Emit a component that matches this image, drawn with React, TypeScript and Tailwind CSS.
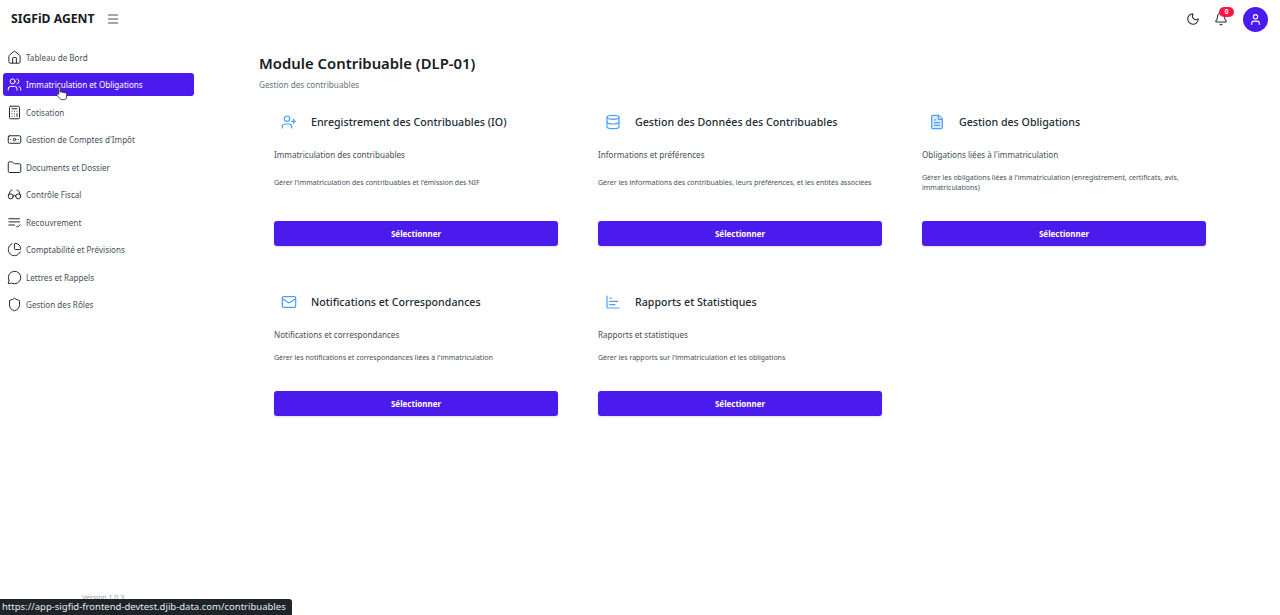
import { Bell, Calculator, Banknote, ChartBar, ChartPie, Database, FileText, Folder, Glasses, House, Mail, Menu, MessageCircle, Moon, Shield, User, UserPlus, Users } from "lucide-react";
import type { ComponentType } from "react";

type Icon = ComponentType<{ size?: number; strokeWidth?: number; className?: string }>;

function ListCheck({ size, strokeWidth, className }: { size?: number; strokeWidth?: number; className?: string }) {
  return (
    <svg width={size} height={size} viewBox="0 0 24 24" fill="none" stroke="currentColor" strokeWidth={strokeWidth} strokeLinecap="round" strokeLinejoin="round" className={className}>
      <path d="M3 6h17M3 11h17M3 16h9M15 17.500l2 2 4-4" />
    </svg>
  );
}

const NAV: { label: string; icon: Icon; active?: boolean }[] = [
  { label: "Tableau de Bord", icon: House },
  { label: "Immatriculation et Obligations", icon: Users, active: true },
  { label: "Cotisation", icon: Calculator },
  { label: "Gestion de Comptes d'Impôt", icon: Banknote },
  { label: "Documents et Dossier", icon: Folder },
  { label: "Contrôle Fiscal", icon: Glasses },
  { label: "Recouvrement", icon: ListCheck },
  { label: "Comptabilité et Prévisions", icon: ChartPie },
  { label: "Lettres et Rappels", icon: MessageCircle },
  { label: "Gestion des Rôles", icon: Shield },
];

const CARDS: { title: string; sub: string; desc: string; icon: Icon; fill?: boolean }[] = [
  {
    title: "Enregistrement des Contribuables (IO)",
    sub: "Immatriculation des contribuables",
    desc: "Gérer l'immatriculation des contribuables et l'émission des NIF",
    icon: UserPlus,
  },
  {
    title: "Gestion des Données des Contribuables",
    sub: "Informations et préférences",
    desc: "Gérer les informations des contribuables, leurs préférences, et les entités associées",
    icon: Database,
  },
  {
    title: "Gestion des Obligations",
    sub: "Obligations liées à l'immatriculation",
    desc: "Gérer les obligations liées à l'immatriculation (enregistrement, certificats, avis, immatriculations)",
    icon: FileText,
    fill: true,
  },
  {
    title: "Notifications et Correspondances",
    sub: "Notifications et correspondances",
    desc: "Gérer les notifications et correspondances liées à l'immatriculation",
    icon: Mail,
  },
  {
    title: "Rapports et Statistiques",
    sub: "Rapports et statistiques",
    desc: "Gérer les rapports sur l'immatriculation et les obligations",
    icon: ChartBar,
  },
];

function Card({ title, sub, desc, icon: Ico, fill }: (typeof CARDS)[number]) {
  return (
    <div className="flex w-[314px] flex-col px-[15px]">
      <div className="flex h-[30px] items-center gap-[14px] pl-[7px]">
        <Ico size={16} strokeWidth={1.8} className={fill ? "shrink-0 fill-blue-100 text-[#4d9ff5]" : "shrink-0 text-[#4d9ff5]"} />
        <h3 className="text-[10.65px] font-medium leading-4 text-[#212b36]">{title}</h3>
      </div>
      <p className="mt-[12px] text-[8.1px] leading-3 text-[#454f5b]">{sub}</p>
      <div className="mb-[28px] mt-[12px] flex flex-1 items-center">
        <p className="text-[7px] leading-[10px] text-[#454f5b]">{desc}</p>
      </div>
      <button className="h-[25px] rounded-[3px] bg-[#4a1bec] pt-px text-[8px] font-bold text-white shadow-sm">Sélectionner</button>
    </div>
  );
}

export default function App() {
  return (
    <div className="relative h-[615px] w-[1280px] overflow-hidden bg-white font-['Noto_Sans',sans-serif]">
      <header className="flex h-[38px] items-center justify-between pl-[11px] pr-[12px]">
        <div className="flex items-center gap-[12px]">
          <span className="text-[12.2px] font-bold text-[#161c24]">SIGFiD AGENT</span>
          <Menu size={14} strokeWidth={1.8} className="text-[#454f5b]" />
        </div>
        <div className="flex items-center">
          <Moon size={14} strokeWidth={1.8} className="text-[#212b36]" />
          <div className="relative ml-[14px]">
            <Bell size={14} strokeWidth={1.8} className="text-[#212b36]" />
            <span className="absolute left-[5px] top-[-5px] flex h-[10px] w-[15px] items-center justify-center rounded-full bg-[#ff1744] text-[6.5px] font-bold text-white">0</span>
          </div>
          <div className="ml-[15px] flex size-[25px] items-center justify-center rounded-full bg-[#4a1bec]">
            <User size={13} strokeWidth={2} className="text-white" />
          </div>
        </div>
      </header>

      <div className="flex">
        <aside className="flex w-[194px] shrink-0 flex-col gap-[4.5px] pl-[3px] pt-[7.9px]">
          {NAV.map(({ label, icon: Ico, active }) => (
            <div
              key={label}
              className={
                active
                  ? "flex h-[23px] items-center gap-[4.5px] rounded-[3px] bg-[#4a1bec] pl-[3.5px] text-[8.1px] text-white"
                  : "flex h-[23px] items-center gap-[4.5px] rounded-[3px] pl-[3.5px] text-[8.1px] text-[#454f5b]"
              }
            >
              <Ico size={15} strokeWidth={1.6} className={active ? "shrink-0" : "shrink-0 text-[#212b36]"} />
              <span className="pt-px">{label}</span>
            </div>
          ))}
        </aside>

        <main className="flex-1 pl-[65px] pt-[13px]">
          <h1 className="text-[14.86px] font-semibold leading-[24px] text-[#161c24]">Module Contribuable (DLP-01)</h1>
          <p className="mt-[4px] text-[8.2px] leading-3 text-[#637381]">Gestion des contribuables</p>
          <div className="mt-[16px] grid w-[962px] grid-cols-3 gap-x-[10px] gap-y-[41px]">
            {CARDS.map((c) => (
              <Card key={c.title} {...c} />
            ))}
          </div>
        </main>
      </div>

      {/* pointer over the active row */}
      <svg className="absolute left-[56px] top-[85px]" width="12" height="16" viewBox="0 0 12 16">
        <path d="M3 1.200c.7 0 1.200.5 1.200 1.200v4.400l5 .9c1 .2 1.600 1 1.500 2l-.4 3.200c-.1.900-.9 1.700-1.900 1.700H5.600c-.7 0-1.300-.3-1.700-.9L1 10.300c-.3-.5-.2-1.100.3-1.400.4-.3 1-.2 1.300.2l.2.3V2.400c0-.7.500-1.200 1.200-1.200z" fill="#fff" stroke="#222" strokeWidth="0.8" />
      </svg>

      <span className="absolute left-[82px] top-[593px] text-[7px] text-[#919eab]">Version 1.0.3</span>
      <div className="absolute bottom-0 left-0 h-[16px] rounded-tr-[3px] bg-[#1f2428] pl-[2px] pr-[6px] text-[9.5px] leading-[15px] text-[#e8eaed]">
        https://app-sigfid-frontend-devtest.djib-data.com/contribuables
      </div>
    </div>
  );
}
